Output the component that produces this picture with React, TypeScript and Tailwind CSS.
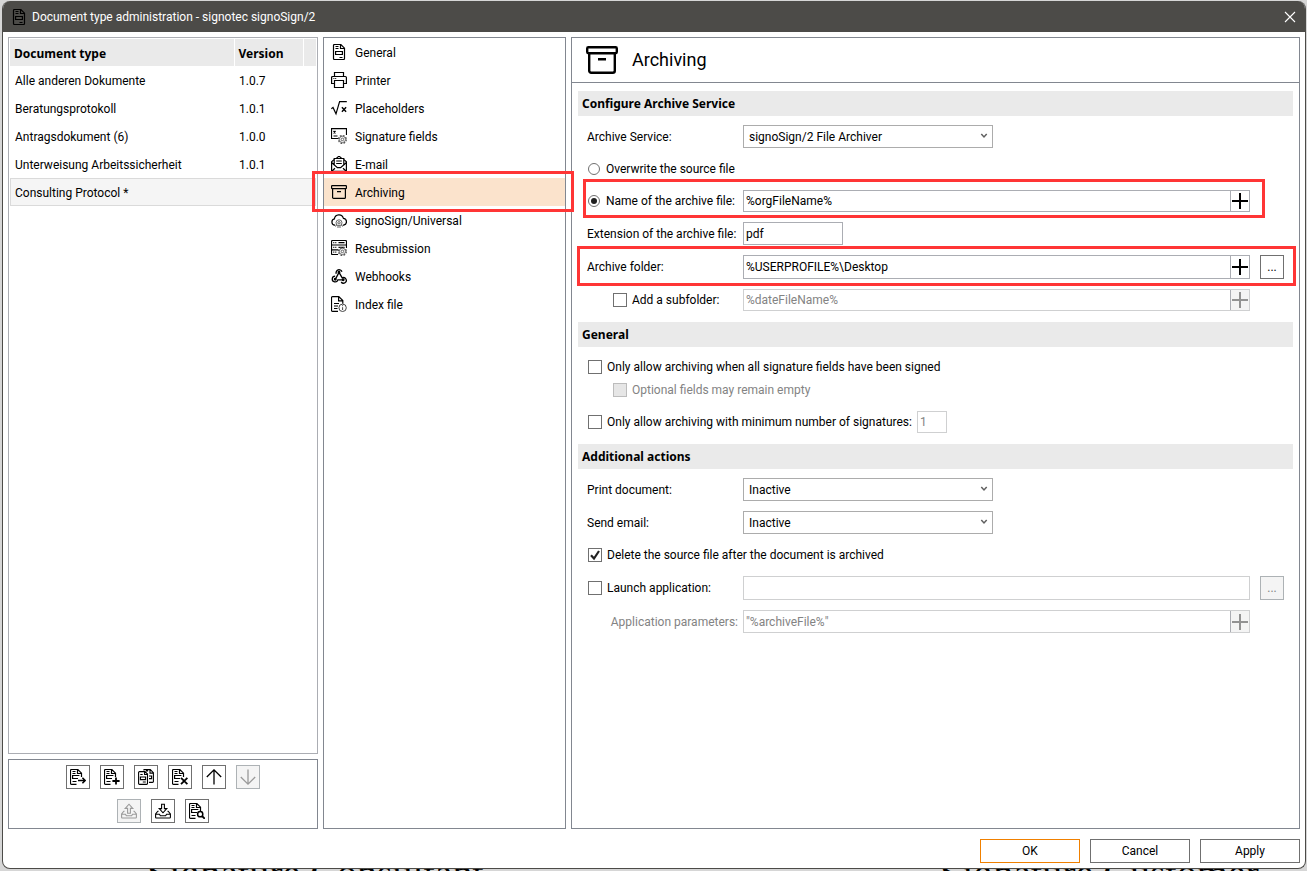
import { useState } from "react";
import type { ReactNode } from "react";

type IconProps = { className?: string };

function Svg({ children, className = "size-4", sw = 1.2 }: { children: ReactNode; className?: string; sw?: number }) {
  return (
    <svg viewBox="0 0 16 16" fill="none" stroke="currentColor" strokeWidth={sw} className={className} aria-hidden="true">
      {children}
    </svg>
  );
}

function DocumentIcon({ className }: IconProps) {
  return (
    <Svg className={className}>
      <path d="M2.5 1.5a1 1 0 0 1 1-1h6.3l3.7 3.7v10.3a1 1 0 0 1-1 1h-9a1 1 0 0 1-1-1z" />
      <path d="M9.5.8v3.7h3.8M4.5 2.5h3M4.5 4.5h3M4.6 7.5h6.8v3H4.6zM8.5 13.5h3" />
    </Svg>
  );
}

function PrinterIcon() {
  return (
    <Svg>
      <path d="M3.5 4.5v-4h9v4M3 11.5H.6v-6a1 1 0 0 1 1-1h12.8a1 1 0 0 1 1 1v6H13M3.5 8.5h9v7h-9zM2.4 6.5h1M4.2 6.5h1" />
    </Svg>
  );
}

function PlaceholderIcon() {
  return (
    <Svg>
      <path d="M.3 8.7 2 7.5l3 6.3L8.6 1.6h7.2" />
      <path strokeWidth="1.4" d="m10.9 7.2 4.2 4.6M15.1 7.2l-4.2 4.6" />
    </Svg>
  );
}

function Gear({ cx, cy }: { cx: number; cy: number }) {
  return (
    <g stroke="#555">
      <circle cx={cx} cy={cy} r="3.9" strokeWidth="1.3" strokeDasharray="1.8 1.26" />
      <circle cx={cx} cy={cy} r="3.1" strokeWidth="0.8" />
      <circle cx={cx} cy={cy} r="1.3" strokeWidth="0.9" />
    </g>
  );
}

function SignatureIcon() {
  return (
    <Svg>
      <path d="M15.5 7V.6H.5v9.9H7M2.5 3l2 2.4M4.5 3l-2 2.4M2.5 8h4" />
      <Gear cx={11.4} cy={11.4} />
    </Svg>
  );
}

function MailIcon() {
  return (
    <Svg>
      <path d="M3 3.6.6 5.8v8.6a1 1 0 0 0 1 1h12.8a1 1 0 0 0 1-1V5.8L13 3.6M5.5 2.2 7 .9a1.5 1.5 0 0 1 2 0l1.5 1.3" />
      <path d="M3.2 8.6V2.5h9.6v6.1M.8 6.7l5.6 5h3.2l5.6-5M5.2 5h5.6M5.2 7.5h5.6M1 15l3-2.8M15 15l-3-2.8" />
    </Svg>
  );
}

function ArchiveIcon({ className }: IconProps) {
  return (
    <Svg className={className}>
      <rect x="0.6" y="1.6" width="14.8" height="3" rx="0.6" />
      <path d="M1.6 4.6v8.8a1 1 0 0 0 1 1h10.8a1 1 0 0 0 1-1V4.6M6 7.6h4" />
    </Svg>
  );
}

function CloudIcon() {
  return (
    <Svg>
      <path d="M4.2 13.2h-.4a3.2 3.2 0 0 1-.4-6.3 4.6 4.6 0 0 1 9-.6 3.5 3.5 0 0 1 .3 6.9h-.9" />
      <g stroke="#555" strokeWidth="0.9">
        <circle cx="8" cy="10.8" r="3" />
        <circle cx="8" cy="10.8" r="1.2" />
        <path d="m4 14.4 1.8-1.2M12 14.4l-1.8-1.2M6 15h4" />
      </g>
    </Svg>
  );
}

function ServerIcon() {
  return (
    <Svg>
      <path d="M15.5 8V1.5a1 1 0 0 0-1-1h-13a1 1 0 0 0-1 1v12a1 1 0 0 0 1 1H7M.5 5h15M.5 9.8H7M7.5 2.7h6M7.5 7.3h6M2.3 2.7h1M4.3 2.7h1M2.3 7.3h1M4.3 7.3h1M2.3 12.2h1M4.3 12.2h1" />
      <Gear cx={11.4} cy={11.4} />
    </Svg>
  );
}

function WebhookIcon() {
  return (
    <svg viewBox="0 0 24 24" fill="none" stroke="currentColor" strokeWidth="2" className="size-4" aria-hidden="true">
      <path d="M12 6.5 7.2 15.8M6.2 12.2a4.3 4.3 0 1 0 4.1 5.6H18M7.9 8.6A4.5 4.5 0 1 1 16.4 5.6M12 6.5l4.8 8.3a4.2 4.2 0 1 1-1.5 6.2" />
      <circle cx="12" cy="6.5" r="1.2" />
      <circle cx="6.4" cy="17" r="1.2" />
      <circle cx="18.3" cy="17.5" r="1.2" />
    </svg>
  );
}

function IndexIcon() {
  return (
    <Svg>
      <path d="M7 15.4H1.5a1 1 0 0 1-1-1V1.6a1 1 0 0 1 1-1h6.3l4 4v3.2M7.6.8v4h4M3 7.5h5M3 10h4M3 12.5h3.5" />
      <g stroke="#444" strokeWidth="1">
        <circle cx="11.6" cy="11.8" r="3.7" />
        <path d="M11.6 11.2v2.8M11.6 9.2v1" />
      </g>
    </Svg>
  );
}

function PageBase() {
  return <path d="M6.5 15.4h-5a1 1 0 0 1-1-1V1.5a1 1 0 0 1 1-1h6.3l3.7 3.7V8M7.5.8v3.7h3.8M2.5 2.5h3M2.5 4.5h3M8 9.5H2.6v-3h6.8M2.5 12.5h4" />;
}

function PageArrowIcon() {
  return (
    <Svg>
      <PageBase />
      <path strokeWidth="1.6" d="M8 11.5h7.2M12.4 8.7l2.8 2.8-2.8 2.8" />
    </Svg>
  );
}

function PageAddIcon() {
  return (
    <Svg>
      <PageBase />
      <path strokeWidth="1.8" d="M8.4 12h7.2M12 8.4v7.2" />
    </Svg>
  );
}

function PageCopyIcon() {
  return (
    <Svg sw={1.1}>
      <path d="M.6 3.5a.9.9 0 0 1 .9-.9H7l2.5 2.5v9.4a.9.9 0 0 1-.9.9H1.5a.9.9 0 0 1-.9-.9zM6.6 2.8v2.7h2.7M2.3 5.5h2.4M2.4 8h5.2v2.6H2.4zM4.8 13h3" />
      <path d="M5.6 1.4A.9.9 0 0 1 6.5.6h5.8l3.1 3.1v8.8a.9.9 0 0 1-.9.9H11M12 .8v3.3h3.2M11 7h2.6v2.6H11M8 1.9h2" />
    </Svg>
  );
}

function PageDeleteIcon() {
  return (
    <Svg>
      <PageBase />
      <path strokeWidth="1.8" d="m9 8.8 6.4 6.4M15.4 8.8 9 15.2" />
    </Svg>
  );
}

function PageSearchIcon() {
  return (
    <Svg>
      <PageBase />
      <circle cx="11.2" cy="11.2" r="2.6" strokeWidth="1.5" />
      <path strokeWidth="1.8" d="m13 13 2.8 2.8" />
    </Svg>
  );
}

function ArrowUpIcon() {
  return (
    <Svg sw={1.3}>
      <path d="M8 15.6V1M.8 8 8 .9 15.2 8" />
    </Svg>
  );
}

function ArrowDownIcon() {
  return (
    <Svg sw={1.3}>
      <path d="M8 .4V15M.8 8 8 15.1 15.2 8" />
    </Svg>
  );
}

function Tray() {
  return <path d="M3.6 8.2H2.8L.6 11v3.2a.8.8 0 0 0 .8.8h13.2a.8.8 0 0 0 .8-.8V11l-2.2-2.8h-.8M.8 11.2h3.6l1 1.6h5.2l1-1.6h3.6" />;
}

function ExportIcon() {
  return (
    <Svg sw={1.1}>
      <Tray />
      <path d="M6.6 10.2V5.4H4.2L8 1.2l3.8 4.2H9.4v4.8z" />
    </Svg>
  );
}

function ImportIcon() {
  return (
    <Svg sw={1.1}>
      <Tray />
      <path d="M6.6 1.2v4.4H4.2L8 9.8l3.8-4.2H9.4V1.2z" />
    </Svg>
  );
}

function PlusIcon() {
  return (
    <svg viewBox="0 0 16 16" stroke="currentColor" strokeWidth="2" className="size-4" aria-hidden="true">
      <path d="M0 8h16M8 0v16" />
    </svg>
  );
}

const documents = [
  { name: "Alle anderen Dokumente", version: "1.0.7" },
  { name: "Beratungsprotokoll", version: "1.0.1" },
  { name: "Antragsdokument (6)", version: "1.0.0" },
  { name: "Unterweisung Arbeitssicherheit", version: "1.0.1" },
  { name: "Consulting Protocol *", version: "" },
];

const pages: { label: string; icon: ReactNode }[] = [
  { label: "General", icon: <DocumentIcon className="size-4" /> },
  { label: "Printer", icon: <PrinterIcon /> },
  { label: "Placeholders", icon: <PlaceholderIcon /> },
  { label: "Signature fields", icon: <SignatureIcon /> },
  { label: "E-mail", icon: <MailIcon /> },
  { label: "Archiving", icon: <ArchiveIcon className="size-4" /> },
  { label: "signoSign/Universal", icon: <CloudIcon /> },
  { label: "Resubmission", icon: <ServerIcon /> },
  { label: "Webhooks", icon: <WebhookIcon /> },
  { label: "Index file", icon: <IndexIcon /> },
];

function ToolButton({ label, disabled, children }: { label: string; disabled?: boolean; children: ReactNode }) {
  return (
    <button
      type="button"
      aria-label={label}
      disabled={disabled}
      className="flex size-6 items-center justify-center border border-[#707070] bg-white text-black disabled:border-[#adb2b5] disabled:bg-[#f4f4f4] disabled:text-[#9a9a9a]"
    >
      {children}
    </button>
  );
}

function BrowseButton({ label, disabled }: { label: string; disabled?: boolean }) {
  return (
    <button
      type="button"
      aria-label={label}
      disabled={disabled}
      className="ml-auto size-6 border border-[#707070] bg-white text-center leading-[22px] disabled:border-[#adb2b5] disabled:bg-[#f4f4f4] disabled:text-[#838383]"
    >
      ...
    </button>
  );
}

function Highlight({ className }: { className: string }) {
  return <span aria-hidden="true" className={`pointer-events-none absolute z-10 border-3 border-[#ff3535] ${className}`} />;
}

function Section({ title, children }: { title: string; children: ReactNode }) {
  return (
    <section className="mb-[11px]">
      <h2 className="h-[25px] bg-[#eaeaea] px-1 font-['Noto_Sans',sans-serif] font-bold leading-[26px]">{title}</h2>
      <div className="flex flex-col gap-[10px] px-[9px] pt-[9px]">{children}</div>
    </section>
  );
}

function Row({ className, children }: { className: string; children: ReactNode }) {
  return <div className={`relative grid grid-cols-[156px_1fr_34px] items-center whitespace-nowrap ${className}`}>{children}</div>;
}

function TokenField({ id, label, value, disabled }: { id: string; label?: string; value: string; disabled?: boolean }) {
  return (
    <div className={`flex h-full min-w-0 border ${disabled ? "border-[#cfd0d1] text-[#838383]" : "border-[#abadb3]"}`}>
      <input id={id} aria-label={label} type="text" defaultValue={value} disabled={disabled} className="min-w-0 flex-1 px-[2px] outline-none" />
      <button
        type="button"
        aria-label="Insert placeholder"
        disabled={disabled}
        className="flex w-[19px] items-center justify-center border-l border-[#abadb3] disabled:bg-[#f4f4f4] disabled:text-[#929292]"
      >
        <PlusIcon />
      </button>
    </div>
  );
}

function Combo({ id, options }: { id: string; options: string[] }) {
  return (
    <div className="relative h-full w-[250px]">
      <select id={id} className="h-full w-full appearance-none border border-[#acacac] bg-white px-[5px] outline-none">
        {options.map((o) => (
          <option key={o}>{o}</option>
        ))}
      </select>
      <svg viewBox="0 0 8 6" fill="none" stroke="#606060" strokeWidth="1.5" className="pointer-events-none absolute right-[5px] top-2 h-[6px] w-2" aria-hidden="true">
        <path d="m1.3 1 2.7 3 2.7-3" />
      </svg>
    </div>
  );
}

function Check({ label, checked, disabled }: { label: string; checked?: boolean; disabled?: boolean }) {
  return (
    <label className={`flex items-center gap-[5px] ${disabled ? "text-[#838383]" : ""}`}>
      <span className="relative block size-[14px]">
        <input
          type="checkbox"
          defaultChecked={checked}
          disabled={disabled}
          className="peer block size-[14px] appearance-none border border-[#707070] bg-white disabled:border-[#bcbcbc] disabled:bg-[#e6e6e6]"
        />
        <svg viewBox="0 0 14 14" fill="none" stroke="#212121" strokeWidth="2.2" className="pointer-events-none absolute inset-0 hidden size-[14px] peer-checked:block" aria-hidden="true">
          <path d="m3 7.2 3 3.3 5-7.5" />
        </svg>
      </span>
      {label}
    </label>
  );
}

function Radio({ label, checked, onChange }: { label: string; checked: boolean; onChange: () => void }) {
  return (
    <label className="flex items-center gap-[6px] pl-px">
      <input
        type="radio"
        name="target"
        checked={checked}
        onChange={onChange}
        className="flex size-3 appearance-none items-center justify-center rounded-full border border-[#707070] bg-white before:size-[6px] before:rounded-full checked:before:bg-[#212121]"
      />
      {label}
    </label>
  );
}

export default function App() {
  const [target, setTarget] = useState("name");
  const [selected, setSelected] = useState(4);

  return (
    <div className="relative flex h-screen min-h-[700px] flex-col overflow-hidden bg-[#d6d6d6] pb-[2px] pl-[2px] pr-px pt-px font-['Roboto',sans-serif] text-[12px] leading-4 text-black">
      <div aria-hidden="true" className="absolute inset-x-0 bottom-[-24px] flex pl-[147px] font-['Liberation_Serif',serif] text-[40px] leading-[42px]">
        <span className="w-[793px]">Signature Consultant</span>
        <span>Signature Customer</span>
      </div>

      <div role="dialog" aria-label="Document type administration" className="relative flex min-h-0 flex-1 flex-col overflow-hidden rounded-lg border border-t-0 border-[#4c4b48] bg-white">
        <header className="flex h-[31px] shrink-0 items-center bg-[#4c4b48] pl-2 pr-[9px] text-white">
          <DocumentIcon className="size-4 text-black" />
          <h1 className="ml-[5px] flex-1">Document type administration - signotec signoSign/2</h1>
          <button type="button" aria-label="Close">
            <svg viewBox="0 0 12 12" stroke="currentColor" strokeWidth="1.1" className="size-3" aria-hidden="true">
              <path d="m1 1 10 10M11 1 1 11" />
            </svg>
          </button>
        </header>

        <main className="flex min-h-0 flex-1 gap-[5px] px-[5px] pt-[5px]">
          <div className="flex w-[310px] shrink-0 flex-col gap-[5px]">
            <div className="flex-1 border border-[#abadb3] p-px">
              <table className="w-full table-fixed border-collapse text-left">
                <thead>
                  <tr className="h-[27px] bg-[#eaeaea] font-['Noto_Sans',sans-serif]">
                    <th className="border-r border-white px-1 pt-[2px]">Document type</th>
                    <th className="w-[69px] border-r border-white px-1 pt-[2px]">Version</th>
                    <th className="w-[13px]" />
                  </tr>
                </thead>
                <tbody>
                  {documents.map((d, i) => (
                    <tr
                      key={d.name}
                      onClick={() => setSelected(i)}
                      className={`h-7 ${i === selected ? "bg-[#f5f5f5] outline outline-[#dadada] -outline-offset-1" : ""}`}
                    >
                      <td className="px-[5px] pt-[2px]">{d.name}</td>
                      <td className="px-[5px] pt-[2px]">{d.version}</td>
                      <td />
                    </tr>
                  ))}
                </tbody>
              </table>
            </div>
            <div className="flex h-[70px] flex-col items-center gap-[10px] border border-[#828790] pt-[5px]">
              <div className="flex gap-[10px]">
                <ToolButton label="Open"><PageArrowIcon /></ToolButton>
                <ToolButton label="Add"><PageAddIcon /></ToolButton>
                <ToolButton label="Copy"><PageCopyIcon /></ToolButton>
                <ToolButton label="Delete"><PageDeleteIcon /></ToolButton>
                <ToolButton label="Move up"><ArrowUpIcon /></ToolButton>
                <ToolButton label="Move down" disabled><ArrowDownIcon /></ToolButton>
              </div>
              <div className="flex gap-[10px]">
                <ToolButton label="Export" disabled><ExportIcon /></ToolButton>
                <ToolButton label="Import"><ImportIcon /></ToolButton>
                <ToolButton label="Search"><PageSearchIcon /></ToolButton>
              </div>
            </div>
          </div>

          <nav className="w-[243px] shrink-0 border border-[#828790]">
            {pages.map((p) => {
              const active = p.label === "Archiving";
              return (
                <div key={p.label} className="relative">
                  <button
                    type="button"
                    aria-current={active ? "page" : undefined}
                    className={`flex h-7 w-full items-center gap-2 pl-[7px] ${active ? "bg-[#fbe3cc]" : ""}`}
                  >
                    {p.icon}
                    <span className="pt-[2px]">{p.label}</span>
                  </button>
                  {active && <Highlight className="-bottom-[6px] -left-3 -right-[9px] -top-[7px]" />}
                </div>
              );
            })}
          </nav>

          <div className="min-w-0 flex-1 border border-[#828790]">
            <div className="flex h-[45px] items-center gap-[14px] border-b border-[#828790] pl-[14px]">
              <ArchiveIcon className="size-8" />
              <h2 className="text-[18px] leading-6">Archiving</h2>
            </div>

            <form className="px-[6px] pt-2" onSubmit={(e) => e.preventDefault()}>
              <Section title="Configure Archive Service">
                <Row className="h-[23px]">
                  <label htmlFor="service">Archive Service:</label>
                  <Combo id="service" options={["signoSign/2 File Archiver"]} />
                </Row>
                <Row className="h-[22px]">
                  <Radio label="Overwrite the source file" checked={target === "source"} onChange={() => setTarget("source")} />
                </Row>
                <Row className="h-[22px]">
                  <Radio label="Name of the archive file:" checked={target === "name"} onChange={() => setTarget("name")} />
                  <TokenField id="name" label="Name of the archive file" value="%orgFileName%" />
                  <Highlight className="-bottom-[6px] -left-1 -top-[11px] right-[19px]" />
                </Row>
                <Row className="h-[23px]">
                  <label htmlFor="extension">Extension of the archive file:</label>
                  <input id="extension" type="text" defaultValue="pdf" className="h-full w-[100px] border border-[#abadb3] px-[2px] outline-none" />
                </Row>
                <Row className="h-6">
                  <label htmlFor="folder">Archive folder:</label>
                  <TokenField id="folder" value="%USERPROFILE%\Desktop" />
                  <BrowseButton label="Browse for archive folder" />
                  <Highlight className="-bottom-[7px] -left-[10px] -right-3 -top-[9px]" />
                </Row>
                <Row className="h-[22px]">
                  <div className="pl-[26px]">
                    <Check label="Add a subfolder:" />
                  </div>
                  <TokenField id="subfolder" label="Subfolder" value="%dateFileName%" disabled />
                </Row>
              </Section>

              <Section title="General">
                <div className="flex flex-col items-start gap-px">
                  <div className="flex h-[22px] items-center pl-px">
                    <Check label="Only allow archiving when all signature fields have been signed" />
                  </div>
                  <div className="flex h-[22px] items-center pl-[26px]">
                    <Check label="Optional fields may remain empty" disabled />
                  </div>
                </div>
                <div className="flex h-[22px] items-center gap-[5px] pl-px">
                  <Check label="Only allow archiving with minimum number of signatures:" />
                  <input aria-label="Minimum number of signatures" type="text" defaultValue="1" disabled className="h-full w-[30px] border border-[#cfd0d1] px-[2px] text-[#838383]" />
                </div>
              </Section>

              <Section title="Additional actions">
                <Row className="h-[23px]">
                  <label htmlFor="print">Print document:</label>
                  <Combo id="print" options={["Inactive", "Active"]} />
                </Row>
                <Row className="h-[23px]">
                  <label htmlFor="email">Send email:</label>
                  <Combo id="email" options={["Inactive", "Active"]} />
                </Row>
                <div className="flex h-[22px] items-center pl-px">
                  <Check label="Delete the source file after the document is archived" checked />
                </div>
                <Row className="h-6">
                  <div className="pl-px">
                    <Check label="Launch application:" />
                  </div>
                  <input aria-label="Application path" type="text" disabled className="h-full border border-[#cfd0d1] px-[2px]" />
                  <BrowseButton label="Browse for application" disabled />
                </Row>
                <Row className="h-[23px]">
                  <label htmlFor="params" className="pr-[5px] text-right text-[#838383]">Application parameters:</label>
                  <TokenField id="params" value={'"%archiveFile%"'} disabled />
                </Row>
              </Section>
            </form>
          </div>
        </main>

        <footer className="flex shrink-0 justify-end gap-[10px] px-[5px] pb-[5px] pt-[10px]">
          <button type="button" className="h-6 w-[100px] border border-[#f08000] bg-white">OK</button>
          <button type="button" className="h-6 w-[100px] border border-[#707070] bg-white">Cancel</button>
          <button type="button" className="h-6 w-[100px] border border-[#707070] bg-white">Apply</button>
        </footer>
      </div>
    </div>
  );
}
